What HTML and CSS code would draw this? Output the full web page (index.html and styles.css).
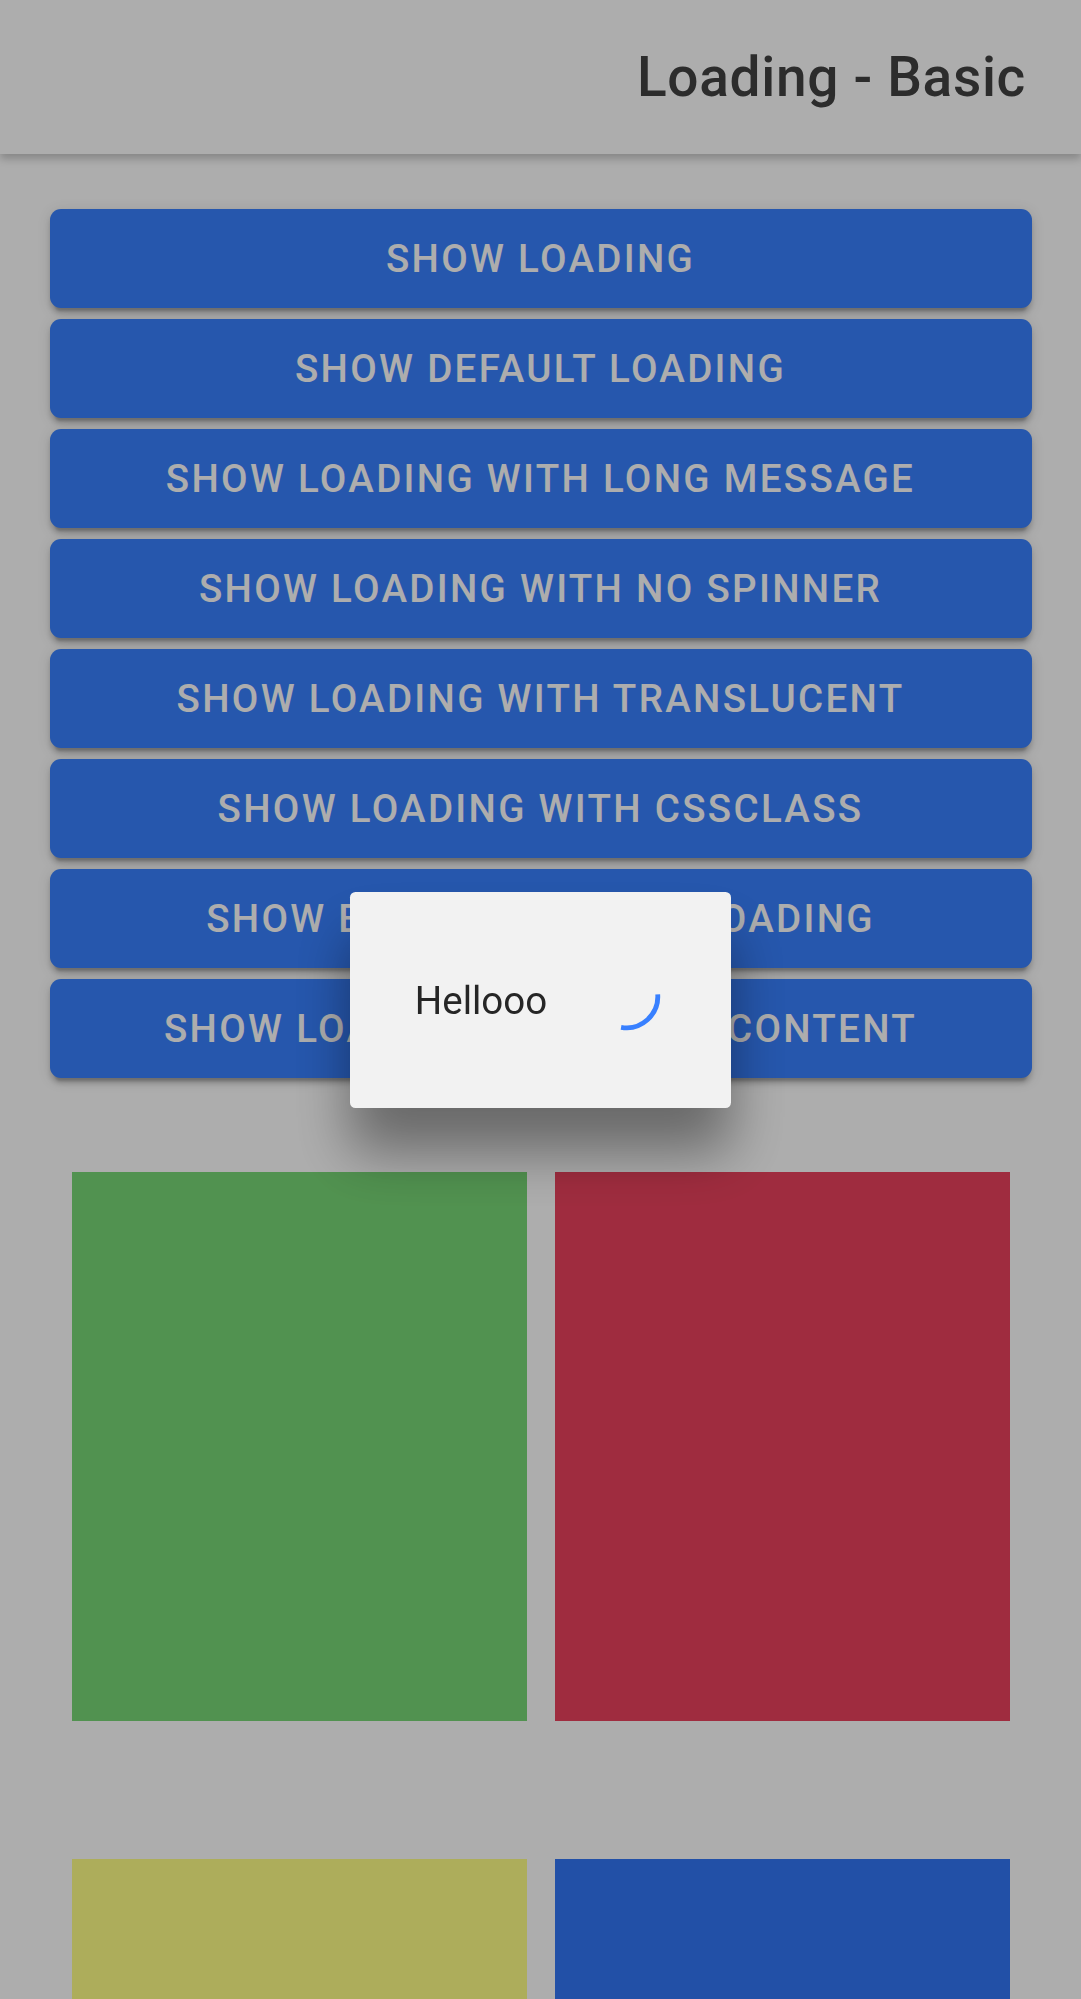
FILE: index.html
```html
<!DOCTYPE html>
<html lang="en">
<head>
<meta charset="utf-8">
<title>Loading - Basic</title>
<link rel="stylesheet" href="styles.css">
</head>
<body>
<div class="app">
  <header class="header">
    <div class="title">Loading - Basic</div>
  </header>
  <main class="content">
    <div class="buttons">
      <button class="btn">Show Loading</button>
      <button class="btn">Show Default Loading</button>
      <button class="btn">Show Loading with long message</button>
      <button class="btn">Show Loading with no spinner</button>
      <button class="btn">Show Loading with translucent</button>
      <button class="btn">Show Loading with cssclass</button>
      <button class="btn">Show Backdrop Click Loading</button>
      <button class="btn">Show Loading with html content</button>
    </div>
    <div class="grid">
      <div class="box box-green"></div>
      <div class="box box-red"></div>
      <div class="box box-yellow"></div>
      <div class="box box-blue"></div>
    </div>
  </main>
</div>

<div class="backdrop"></div>
<div class="loading-layer">
  <div class="loading">
    <svg class="spinner" viewBox="0 0 64 64" width="77" height="77" aria-hidden="true">
      <path d="M57.94 30.19 A26 26 0 0 1 27.49 57.61" fill="none" stroke="#3880ff" stroke-width="4"/>
    </svg>
    <div class="message">Hellooo</div>
  </div>
</div>
</body>
</html>
```

FILE: styles.css
```css
html, body {
  margin: 0;
  padding: 0;
}
body {
  background: #ffffff;
  font-family: Roboto, "Noto Sans", "Liberation Sans", sans-serif;
  width: 1081px;
  height: 1999px;
  overflow: hidden;
}
.header {
  height: 154px;
  background: #ffffff;
  display: flex;
  align-items: center;
  justify-content: flex-end;
  padding: 0 55px;
  box-shadow: 0 5px 8px rgba(0, 0, 0, 0.22);
  position: relative;
  z-index: 2;
}
.title {
  font-size: 55px;
  font-weight: 500;
  letter-spacing: 0.0125em;
  color: #424242;
  line-height: 1;
}
.content {
  padding: 44px;
}
.buttons {
  display: block;
}
.btn {
  display: block;
  width: calc(100% - 11px);
  height: 99px;
  margin: 11px 5.5px;
  border: 0;
  border-radius: 11px;
  background: #3880ff;
  color: #ffffff;
  font-family: Roboto, "Noto Sans", "Liberation Sans", sans-serif;
  font-size: 38.5px;
  font-weight: 500;
  letter-spacing: 0.06em;
  text-transform: uppercase;
  padding: 0 20px;
  box-shadow: 0 8.25px 2.75px -5.5px rgba(0, 0, 0, 0.2),
              0 5.5px 5.5px 0 rgba(0, 0, 0, 0.14),
              0 2.75px 13.75px 0 rgba(0, 0, 0, 0.12);
}
.grid {
  margin-top: 93.5px;
  padding: 0 27.5px 0 27.5px;
  display: grid;
  grid-template-columns: 1fr 1fr;
  column-gap: 28px;
  row-gap: 137.5px;
}
.box {
  height: 549.5px;
}
.box-green { background: #78d776; }
.box-red { background: #eb425d; }
.box-yellow { background: #ffff86; }
.box-blue { background: #3377f6; }

.backdrop {
  position: fixed;
  inset: 0;
  background: rgba(0, 0, 0, 0.32);
  z-index: 10;
}
.loading-layer {
  position: fixed;
  inset: 0;
  z-index: 11;
  display: flex;
  align-items: center;
  justify-content: center;
}
.loading {
  display: flex;
  flex-direction: row-reverse;
  align-items: center;
  background: #f2f2f2;
  border-radius: 5.5px;
  padding: 66px 66px 73px 65px;
  margin-top: 1px;
  box-shadow: 0 44px 55px rgba(0, 0, 0, 0.4);
}
.spinner {
  display: block;
  width: 77px;
  height: 77px;
}
.message {
  margin-right: 41px;
  font-size: 38.5px;
  color: #262626;
  padding-top: 8px;
  line-height: normal;
}
```
